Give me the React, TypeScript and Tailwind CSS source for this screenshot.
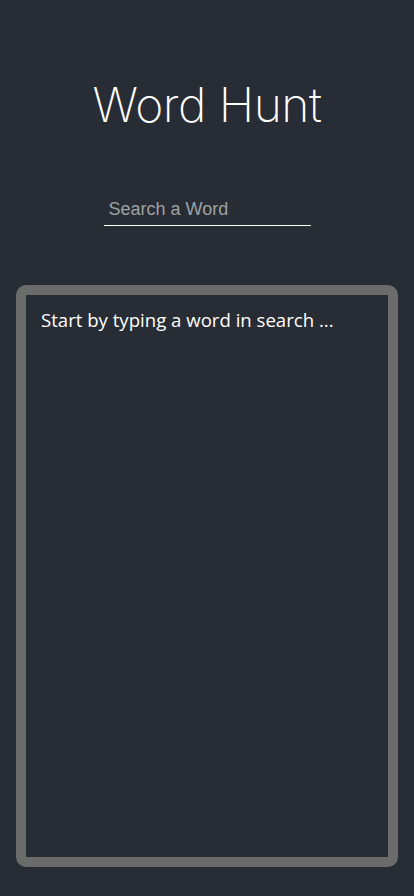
import React, { useState } from 'react';

export default function App() {
  const [word, setWord] = useState('');

  return (
    <div className="min-h-[896px] w-full bg-[#282c34] flex flex-col items-center text-white">
      <h1 className="mt-[76px] text-[48px] leading-[58px] font-extralight tracking-[-0.5px] font-['Inter',sans-serif]">
        Word Hunt
      </h1>

      <div className="mt-[65px] w-[207px] border-b border-white">
        <input
          value={word}
          onChange={(e) => setWord(e.target.value)}
          placeholder="Search a Word"
          autoFocus
          className="block w-full h-[26px] bg-transparent outline-none px-[5px] pt-0 pb-[6px] text-[18px] leading-[20px] text-white placeholder:text-[#9ea1a6] font-['Liberation_Sans',Arial,sans-serif]"
        />
      </div>

      <div className="mt-[59px] mb-[29px] w-[382px] h-[582px] border-[10px] border-[#6b6b6b] rounded-[10px] px-[15px] py-[11px]">
        <p className="text-[18.6px] leading-[28px] font-['Open_Sans',sans-serif]">
          {word ? word : 'Start by typing a word in search ...'}
        </p>
      </div>
    </div>
  );
}
